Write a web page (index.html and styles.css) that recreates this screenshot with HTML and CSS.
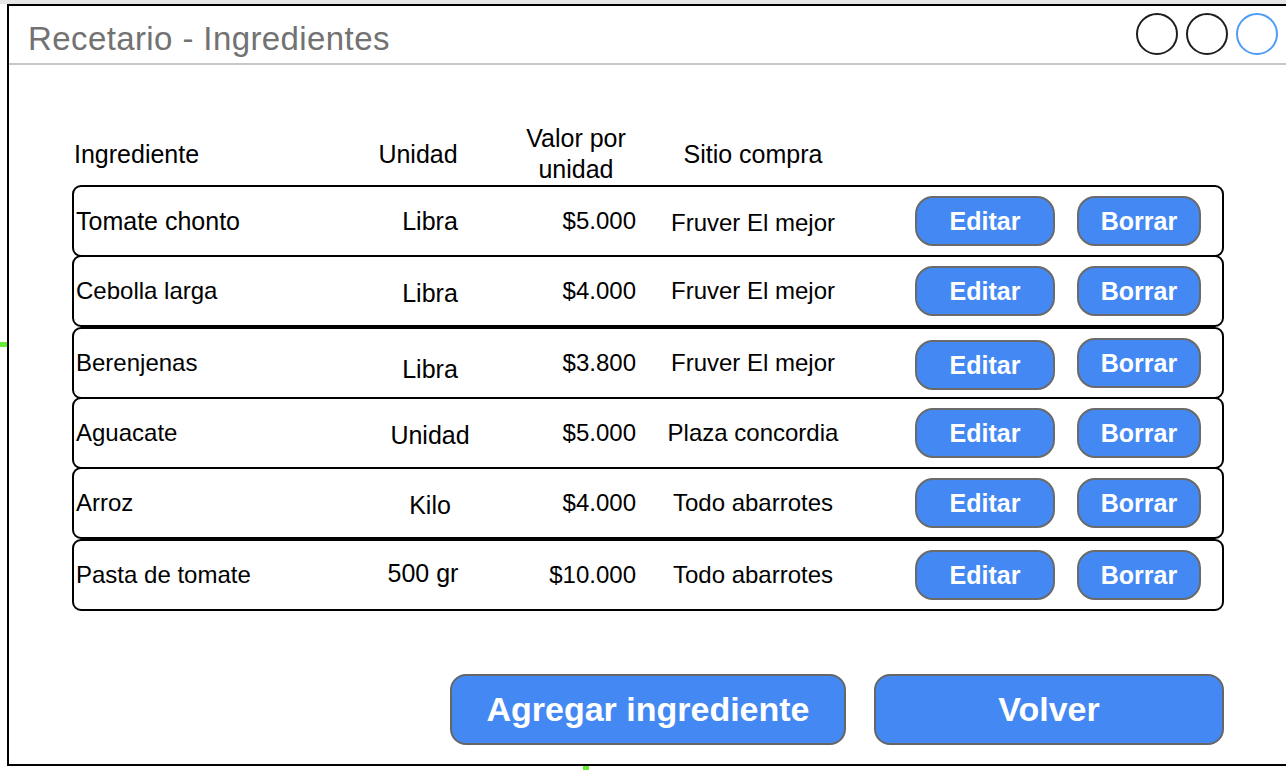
FILE: index.html
```html
<!DOCTYPE html>
<html lang="es">
<head>
<meta charset="utf-8">
<title>Recetario - Ingredientes</title>
<link rel="stylesheet" href="styles.css">
</head>
<body>
<div class="strip"></div>
<div class="window">
  <div class="titlebar">
    <span class="title">Recetario - Ingredientes</span>
    <div class="controls">
      <span class="dot"></span>
      <span class="dot"></span>
      <span class="dot dot-blue"></span>
    </div>
  </div>
  <div class="content">
    <div class="table">
      <div class="thead">
        <div class="h h-name">Ingrediente</div>
        <div class="h h-unit">Unidad</div>
        <div class="h h-val">Valor por<br>unidad</div>
        <div class="h h-site">Sitio compra</div>
        <div></div>
      </div>
      <div class="row">
        <div class="c c-name lg">Tomate chonto</div>
        <div class="c c-unit lg">Libra</div>
        <div class="c c-val">$5.000</div>
        <div class="c c-site low">Fruver El mejor</div>
        <div class="c c-act"><button class="btn btn-edit">Editar</button><button class="btn btn-del">Borrar</button></div>
      </div>
      <div class="row">
        <div class="c c-name">Cebolla larga</div>
        <div class="c c-unit lg low">Libra</div>
        <div class="c c-val">$4.000</div>
        <div class="c c-site">Fruver El mejor</div>
        <div class="c c-act"><button class="btn btn-edit">Editar</button><button class="btn btn-del">Borrar</button></div>
      </div>
      <div class="row row-thick">
        <div class="c c-name">Berenjenas</div>
        <div class="c c-unit lg lower">Libra</div>
        <div class="c c-val">$3.800</div>
        <div class="c c-site">Fruver El mejor</div>
        <div class="c c-act"><button class="btn btn-edit low">Editar</button><button class="btn btn-del">Borrar</button></div>
      </div>
      <div class="row">
        <div class="c c-name">Aguacate</div>
        <div class="c c-unit lg low">Unidad</div>
        <div class="c c-val">$5.000</div>
        <div class="c c-site">Plaza concordia</div>
        <div class="c c-act"><button class="btn btn-edit">Editar</button><button class="btn btn-del">Borrar</button></div>
      </div>
      <div class="row">
        <div class="c c-name">Arroz</div>
        <div class="c c-unit lg low">Kilo</div>
        <div class="c c-val">$4.000</div>
        <div class="c c-site">Todo abarrotes</div>
        <div class="c c-act"><button class="btn btn-edit">Editar</button><button class="btn btn-del">Borrar</button></div>
      </div>
      <div class="row row-thick">
        <div class="c c-name">Pasta de tomate</div>
        <div class="c c-unit lg c-unit-left">500 gr</div>
        <div class="c c-val">$10.000</div>
        <div class="c c-site">Todo abarrotes</div>
        <div class="c c-act"><button class="btn btn-edit">Editar</button><button class="btn btn-del">Borrar</button></div>
      </div>
    </div>
    <div class="actions">
      <button class="bigbtn bigbtn-add">Agregar ingrediente</button>
      <button class="bigbtn bigbtn-back">Volver</button>
    </div>
  </div>
</div>
<span class="marker marker-left"></span>
<span class="marker marker-bottom"></span>
</body>
</html>
```

FILE: styles.css
```css
* { box-sizing: border-box; }

html, body {
  margin: 0;
  padding: 0;
  background: #ffffff;
  overflow: hidden;
  font-family: "Liberation Sans", Arial, Helvetica, sans-serif;
  color: #000;
}

body {
  position: relative;
  width: 1286px;
  height: 770px;
}

.strip {
  height: 4px;
  background: #e8e6e4;
}

.window {
  margin-left: 7px;
  width: 1279px;
  height: 762px;
  border-left: 2px solid #000;
  border-top: 2px solid #000;
  border-bottom: 2px solid #000;
  background: #fff;
}

.titlebar {
  height: 59px;
  border-bottom: 2px solid #c6c6c6;
  display: flex;
  align-items: center;
  justify-content: space-between;
  padding-left: 19px;
  padding-right: 8px;
}

.title {
  font-size: 33px;
  color: #727272;
  padding-top: 9px;
  letter-spacing: 0.4px;
}

.controls {
  display: flex;
  gap: 8px;
  margin-top: -1px;
}

.dot {
  width: 42px;
  height: 42px;
  border: 2px solid #1e1e1e;
  border-radius: 50%;
}

.dot-blue {
  border-color: #4d9cf6;
}

.content {
  padding-top: 58px;
  padding-left: 63px;
}

.table {
  width: 1152px;
}

.thead,
.row {
  display: grid;
  grid-template-columns: 296px 120px 150px 226px 356px;
  align-items: center;
}

.thead {
  height: 62px;
  padding: 0 2px;
  font-size: 25px;
  line-height: 31px;
}

.h-name { padding-left: 0; }
.h-unit { text-align: center; padding-right: 24px; }
.h-val { text-align: center; padding-left: 22px; }
.h-site { text-align: center; }

.row {
  height: 72px;
  border: 2px solid #000;
  border-radius: 9px;
  margin-top: -2px;
  font-size: 24px;
}

.thead + .row { margin-top: 0; }

.row-thick { margin-top: 0; }

.c { line-height: 28px; }
.lg { font-size: 25px; }
.low { position: relative; top: 2px; }
.lower { position: relative; top: 6px; }

.c-name { padding-left: 2px; }
.c-unit { text-align: center; }
.c-unit-left { padding-right: 14px; position: relative; top: -2px; }
.c-val { text-align: right; padding-right: 4px; }
.c-site { text-align: center; }

.c-act {
  display: flex;
  align-items: center;
  gap: 22px;
  padding-left: 49px;
}

.btn {
  height: 50px;
  border: 2px solid #6a6a6a;
  border-radius: 18px;
  background: #4489f3;
  color: #fff;
  font-family: "Liberation Sans", Arial, Helvetica, sans-serif;
  font-weight: bold;
  font-size: 25px;
  padding: 0;
  cursor: pointer;
}

.btn-edit { width: 140px; }
.btn-del { width: 124px; }

.actions {
  width: 1152px;
  display: flex;
  justify-content: flex-end;
  gap: 28px;
  margin-top: 63px;
}

.bigbtn {
  height: 71px;
  border: 2px solid #666;
  border-radius: 16px;
  background: #4489f3;
  color: #fff;
  font-family: "Liberation Sans", Arial, Helvetica, sans-serif;
  font-weight: bold;
  font-size: 34px;
  padding: 0;
}

.bigbtn-add { width: 396px; }
.bigbtn-back { width: 350px; }

.marker {
  position: absolute;
  background: #66ee33;
}

.marker-left {
  left: 0;
  top: 342px;
  width: 7px;
  height: 5px;
}

.marker-bottom {
  left: 583px;
  top: 766px;
  width: 6px;
  height: 4px;
}
```
